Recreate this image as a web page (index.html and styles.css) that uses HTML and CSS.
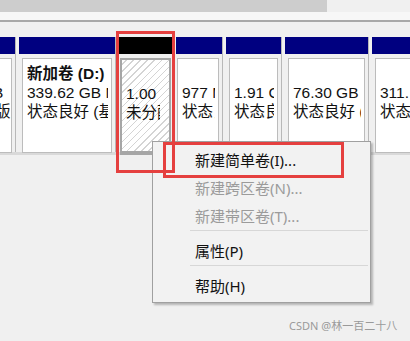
FILE: index.html
```html
<!DOCTYPE html>
<html lang="zh-CN">

<head>
    <meta charset="UTF-8">
    <meta name="viewport" content="width=device-width, initial-scale=1.0">
    <title>磁盘管理</title>
    <link rel="stylesheet" href="styles.css">
</head>

<body>
    <div class="top">
        <div class="thumb"></div>
    </div>
    <div class="top-gap"></div>
    <div class="rule"></div>

    <div class="disk">
        <div class="part first">
            <div class="head"></div>
            <div class="body">
                <div class="box">
                    <p>&nbsp;</p>
                    <p class="tail-a">B</p>
                    <p class="tail-b">版</p>
                </div>
            </div>
        </div>
        <div class="part w96">
            <div class="head"></div>
            <div class="body">
                <div class="box">
                    <p class="name">新加卷 (D:)</p>
                    <p>339.62 GB N</p>
                    <p>状态良好 (基</p>
                </div>
            </div>
        </div>
        <div class="part w53 sel">
            <div class="head black"></div>
            <div class="body">
                <div class="box hatch">
                    <p>&nbsp;</p>
                    <p>1.00</p>
                    <p>未分配</p>
                </div>
            </div>
        </div>
        <div class="part w46">
            <div class="head"></div>
            <div class="body">
                <div class="box">
                    <p>&nbsp;</p>
                    <p>977 M</p>
                    <p>状态良</p>
                </div>
            </div>
        </div>
        <div class="part w55">
            <div class="head"></div>
            <div class="body">
                <div class="box">
                    <p>&nbsp;</p>
                    <p>1.91 G</p>
                    <p>状态良</p>
                </div>
            </div>
        </div>
        <div class="part w83">
            <div class="head"></div>
            <div class="body">
                <div class="box">
                    <p>&nbsp;</p>
                    <p>76.30 GB</p>
                    <p>状态良好 (</p>
                </div>
            </div>
        </div>
        <div class="part last">
            <div class="head"></div>
            <div class="body">
                <div class="box">
                    <p>&nbsp;</p>
                    <p>311.</p>
                    <p>状态</p>
                </div>
            </div>
        </div>
    </div>

    <!-- 右键菜单 -->
    <ul class="menu">
        <li>新建简单卷(I)...</li>
        <li class="off">新建跨区卷(N)...</li>
        <li class="off">新建带区卷(T)...</li>
        <li class="sep"></li>
        <li>属性(P)</li>
        <li class="sep"></li>
        <li>帮助(H)</li>
    </ul>

    <div class="mark mark-part"></div>
    <div class="mark mark-item"></div>

    <div class="watermark">CSDN @林一百二十八</div>
</body>

</html>
```
FILE: styles.css
```css
* {
    margin: 0;
    padding: 0;
}

html,
body {
    width: 410px;
    height: 341px;
    overflow: hidden;
}

body {
    position: relative;
    background: #f0f0f0;
    font-family: "Noto Sans", "Noto Sans CJK SC", sans-serif;
    color: #111;
}

.top {
    height: 12px;
    background: #f0f0f0;
}

.top .thumb {
    width: 327px;
    height: 12px;
    background: #cdcdcd;
}

.top-gap {
    height: 8px;
    background: #f7f7f7;
}

.rule {
    height: 2px;
    background: #a8a8a8;
}

.disk {
    display: flex;
    gap: 4px;
    margin-top: 15px;
    border-bottom: 3px solid #d9d9d9;
}

.part {
    flex: none;
    height: 115px;
    box-shadow: 1px 0 0 #b8b8b8;
}

.part.first {
    width: 15px;
}

.w96 { width: 96px; }
.w53 { width: 53px; }
.w46 { width: 46px; }
.w55 { width: 55px; }
.w83 { width: 83px; }

.part.last {
    width: 60px;
}

.head {
    height: 17px;
    background: #000080;
}

.head.black {
    background: #000;
}

.body {
    padding: 4px 3px 0;
}

.w46 .body {
    padding-left: 1px;
}

.box {
    height: 88px;
    background: #fff;
    border: 1px solid #bcbcbc;
    padding: 5px 3px 0 4px;
    white-space: nowrap;
    font-family: "Liberation Sans", "Noto Sans CJK SC", sans-serif;
    font-size: 15.5px;
    line-height: 19px;
}

.box p {
    overflow: hidden;
}

.box .name {
    font-weight: bold;
}

.first .body {
    padding-left: 0;
}

.first .box {
    border-left: none;
    padding: 5px 0 0;
}

.first .tail-a {
    text-indent: -7px;
}

.first .tail-b {
    text-indent: -5px;
}

.sel .body {
    padding: 4px 1px 0;
}

.box.hatch {
    height: 86px;
    padding-right: 9px;
    border: 2px solid #a6a6a6;
    border-bottom-width: 4px;
    background: repeating-linear-gradient(-45deg, #fff 0, #fff 4px, #d4d4d4 4px, #d4d4d4 5px);
}

.menu {
    position: absolute;
    left: 152px;
    top: 141px;
    width: 217px;
    padding: 4px 0 2px;
    list-style: none;
    background: #f2f2f2;
    border: 1px solid #a0a0a0;
    box-shadow: 2px 2px 2px rgba(0, 0, 0, 0.25);
    font-size: 15px;
}

.menu li {
    height: 28px;
    line-height: 28px;
    padding-left: 42px;
    color: #111;
}

.menu li.off {
    color: #9b9b9b;
}

.menu li.sep {
    height: 1px;
    margin: 0 2px 6px 37px;
    padding: 0;
    background: #d7d7d7;
}

.mark {
    position: absolute;
    border: 3px solid #e5403f;
}

.mark-part {
    left: 116px;
    top: 31px;
    width: 53px;
    height: 136px;
}

.mark-item {
    left: 163px;
    top: 142px;
    width: 175px;
    height: 30px;
}

.watermark {
    position: absolute;
    left: 289px;
    top: 318px;
    font-size: 11px;
    line-height: 16px;
    color: #9a9a9a;
}
```
